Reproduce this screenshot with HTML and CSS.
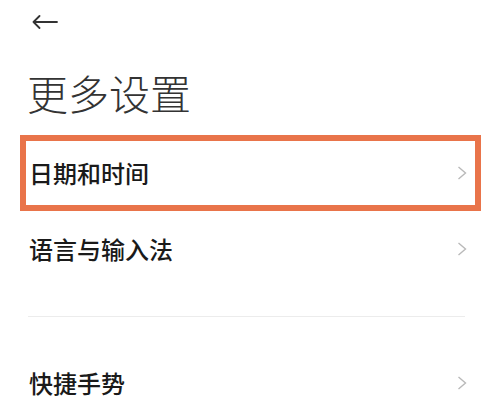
FILE: index.html
```html
<!DOCTYPE html>
<html lang="zh-CN">

<head>
    <meta charset="UTF-8">
    <title>更多设置</title>
    <link rel="stylesheet" href="styles.css">
</head>

<body>
    <div class="top-bar">
        <svg class="back" width="26" height="14" viewBox="0 0 26 14">
            <path d="M25 7H1.5M7.5 1L1.5 7L7.5 13" fill="none" stroke="#333" stroke-width="1.8" stroke-linecap="round" stroke-linejoin="round"/>
        </svg>
    </div>
    <h1 class="page-title">更多设置</h1>

    <ul class="setting-list">
        <li class="setting-item active">
            <span class="item-name">日期和时间</span>
            <svg class="arrow" width="10" height="14" viewBox="0 0 10 14">
                <path d="M1.5 1L8.5 7L1.5 13" fill="none" stroke="#b9b9b9" stroke-width="1.4"/>
            </svg>
        </li>
        <li class="setting-item">
            <span class="item-name">语言与输入法</span>
            <svg class="arrow" width="10" height="14" viewBox="0 0 10 14">
                <path d="M1.5 1L8.5 7L1.5 13" fill="none" stroke="#b9b9b9" stroke-width="1.4"/>
            </svg>
        </li>
        <li class="divider"></li>
        <li class="setting-item">
            <span class="item-name">快捷手势</span>
            <svg class="arrow" width="10" height="14" viewBox="0 0 10 14">
                <path d="M1.5 1L8.5 7L1.5 13" fill="none" stroke="#b9b9b9" stroke-width="1.4"/>
            </svg>
        </li>
    </ul>
</body>

</html>
```

FILE: styles.css
```css
* {
    padding: 0;
    margin: 0;
    box-sizing: border-box;
}

body {
    width: 500px;
    height: 412px;
    overflow: hidden;
    background-color: #fff;
    font-family: "Noto Sans CJK SC", "Noto Sans", sans-serif;
    color: #1a1a1a;
}

.top-bar {
    padding: 15px 0 0 32px;
    height: 29px;
}

.back {
    display: block;
}

.page-title {
    margin: 43px 0 22px 27px;
    font-size: 41px;
    line-height: 41px;
    font-weight: 300;
    color: #333;
}

.setting-list {
    list-style-type: none;
}

.setting-item {
    display: flex;
    align-items: center;
    justify-content: space-between;
    height: 76px;
    margin: 0 19px 0 20px;
    padding: 0 8px 0 3px;
    border: 6px solid transparent;
}

.setting-item.active {
    border-color: #e9744a;
}

.item-name {
    font-size: 24px;
    font-weight: 500;
    line-height: 24px;
}

.arrow {
    display: block;
}

.divider {
    height: 1px;
    margin: 29px 35px 28px 28px;
    background-color: #ececec;
}
```
